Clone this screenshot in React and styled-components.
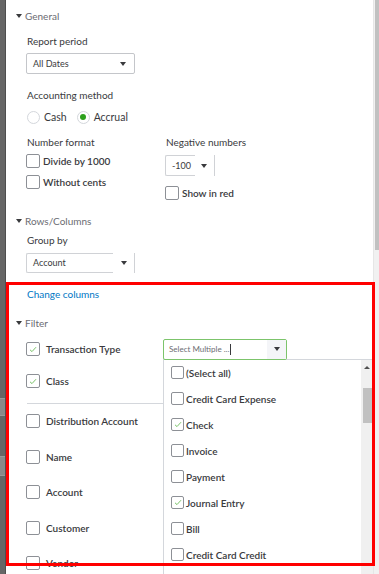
import React from "react";
import styled, { createGlobalStyle } from "styled-components";

const GlobalStyle = createGlobalStyle`
  html, body {
    margin: 0;
    padding: 0;
    background: #ffffff;
  }
  body {
    font-family: Lato, "Open Sans", "Liberation Sans", sans-serif;
  }
`;

const Screen = styled.div`
  position: relative;
  width: 379px;
  height: 574px;
  display: flex;
  overflow: hidden;
  background: #ffffff;
`;

const Backdrop = styled.div`
  width: 6px;
  flex-shrink: 0;
  background: #666666;
  border-right: 1px solid #4e4e4e;
  box-sizing: border-box;
  display: flex;
  flex-direction: column;
`;

const BackdropCell = styled.div`
  margin-top: ${p => p.$top}px;
  height: ${p => p.$height}px;
  background: #8a8a8a;
  border-top: 1px solid #9a9a9a;
  border-bottom: 1px solid #9a9a9a;
`;

const Panel = styled.div`
  flex: 1;
  min-width: 0;
  padding-left: 10px;
  display: flex;
  flex-direction: column;
  color: #393a3d;
`;

const PanelScroll = styled.div`
  width: 5px;
  flex-shrink: 0;
  background: #f1f1f1;
  border-left: 1px solid #e6e6e6;
`;

const PanelThumb = styled.div`
  margin-left: 1px;
  height: 250px;
  background: #c1c1c1;
`;

const SectionHeader = styled.div`
  display: flex;
  align-items: center;
  gap: 3px;
  height: 16px;
  margin-top: ${p => p.$top}px;
  font-size: 10px;
  color: #6b6c72;
`;

const Caret = styled.span`
  width: 0;
  height: 0;
  border-left: 3px solid transparent;
  border-right: 3px solid transparent;
  border-top: 4px solid #393a3d;
`;

const Indent = styled.div`
  margin-left: 10px;
  display: flex;
  flex-direction: column;
`;

const Label = styled.div`
  height: 16px;
  line-height: 16px;
  margin-top: ${p => p.$top || 0}px;
  margin-left: 1px;
  font-size: 10px;
  color: #393a3d;
`;

const SelectBox = styled.div`
  display: flex;
  align-items: center;
  justify-content: space-between;
  box-sizing: border-box;
  width: ${p => p.$width}px;
  height: ${p => p.$height}px;
  margin-top: ${p => p.$top}px;
  padding: 0 8px 0 6px;
  border: 1px solid #c4c6ca;
  border-radius: 2px;
  font-size: 9px;
  color: #393a3d;
`;

const SplitSelect = styled.div`
  display: flex;
  height: ${p => p.$height}px;
  margin-top: ${p => p.$top}px;
`;

const SplitText = styled.div`
  display: flex;
  align-items: center;
  box-sizing: border-box;
  width: ${p => p.$width}px;
  padding-left: 6px;
  border: 1px solid #d0d2d6;
  border-right: none;
  border-radius: 2px 0 0 2px;
  font-size: 9px;
  color: #393a3d;
`;

const SplitCaret = styled.div`
  display: flex;
  align-items: center;
  justify-content: ${p => (p.$left ? "flex-start" : "center")};
  padding-left: ${p => (p.$left ? 6 : 0)}px;
  box-sizing: border-box;
  width: ${p => p.$width}px;
  border-right: 1px solid #d0d2d6;
`;

const SmallCaret = styled.span`
  width: 0;
  height: 0;
  border-left: 3px solid transparent;
  border-right: 3px solid transparent;
  border-top: 4px solid #393a3d;
`;

const RadioRow = styled.div`
  display: flex;
  align-items: center;
  height: 16px;
  margin-top: 6px;
  margin-left: 1px;
  gap: 10px;
  font-size: 10.5px;
`;

const RadioOption = styled.label`
  display: flex;
  align-items: center;
  gap: 4px;
`;

const RadioCircle = styled.span`
  width: 13px;
  height: 13px;
  box-sizing: border-box;
  border-radius: 50%;
  border: 1px solid #d4d7dc;
  display: flex;
  align-items: center;
  justify-content: center;
  &::after {
    content: "";
    width: 6px;
    height: 6px;
    border-radius: 50%;
    background: ${p => (p.$on ? "#2ca01c" : "transparent")};
  }
`;

const TwoCols = styled.div`
  display: flex;
  margin-top: 9px;
`;

const Column = styled.div`
  width: ${p => (p.$width ? `${p.$width}px` : "auto")};
  display: flex;
  flex-direction: column;
`;

const CheckRow = styled.div`
  display: flex;
  align-items: center;
  gap: ${p => p.$gap || 3}px;
  height: ${p => p.$height || 16}px;
  margin-top: ${p => p.$top || 0}px;
  font-size: 10px;
  font-weight: 600;
  color: #393a3d;
`;

const Box = styled.span`
  width: ${p => p.$size}px;
  height: ${p => p.$size}px;
  flex-shrink: 0;
  box-sizing: border-box;
  border: 1px solid #8d9096;
  border-radius: 2px;
  background: #ffffff;
  display: flex;
  align-items: center;
  justify-content: center;
`;

const Link = styled.div`
  height: 16px;
  line-height: 16px;
  margin-top: 13px;
  margin-left: 1px;
  font-size: 10px;
  color: #0077c5;
`;

const FilterBody = styled.div`
  display: flex;
  margin-top: 9px;
`;

const FilterLeft = styled.div`
  width: 137px;
  flex-shrink: 0;
  display: flex;
  flex-direction: column;
`;

const Divider = styled.div`
  height: 1px;
  margin: 11px 0 0 1px;
  background: #d4d7dc;
`;

const FilterRight = styled.div`
  flex: 1;
  display: flex;
  flex-direction: column;
`;

const SearchInput = styled.div`
  display: flex;
  width: 124px;
  height: 21px;
  box-sizing: border-box;
  border: 1px solid #7cc46b;
  border-radius: 2px;
  background: #ffffff;
  position: relative;
  z-index: 1;
`;

const SearchText = styled.div`
  flex: 1;
  display: flex;
  align-items: center;
  padding-left: 5px;
  font-size: 8px;
  color: #6b6c72;
`;

const TextCursor = styled.span`
  width: 1px;
  height: 11px;
  margin-left: 1px;
  background: #393a3d;
`;

const SearchCaret = styled.div`
  width: 19px;
  display: flex;
  align-items: center;
  justify-content: center;
  background: #f4f5f8;
`;

const Dropdown = styled.div`
  flex: 1;
  display: flex;
  margin-top: -1px;
  border-top: 1px solid #d4d7dc;
  border-left: 1px solid #d4d7dc;
  background: #ffffff;
`;

const OptionList = styled.div`
  flex: 1;
  display: flex;
  flex-direction: column;
`;

const OptionRow = styled.div`
  display: flex;
  align-items: center;
  gap: 2px;
  height: 26px;
  flex-shrink: 0;
  padding-left: 7px;
  font-size: 10px;
  font-weight: 600;
  color: #393a3d;
`;

const DropScroll = styled.div`
  width: 12px;
  flex-shrink: 0;
  background: #f0f0f0;
  display: flex;
  flex-direction: column;
  align-items: center;
`;

const UpArrow = styled.span`
  margin-top: 6px;
  width: 0;
  height: 0;
  border-left: 3px solid transparent;
  border-right: 3px solid transparent;
  border-bottom: 3px solid #505050;
`;

const DropThumb = styled.div`
  width: 9px;
  height: 35px;
  margin-top: 19px;
  background: #c1c1c1;
`;

const Highlight = styled.div`
  position: absolute;
  left: 6px;
  top: 282px;
  width: 369px;
  height: 284px;
  box-sizing: border-box;
  border: 3px solid #ff0000;
  pointer-events: none;
`;

const Check = () => (
  <svg width="8" height="7" viewBox="0 0 8 7">
    <polyline points="1,3.8 3,5.6 7,1.2" fill="none" stroke="#7cc46b" strokeWidth="1" />
  </svg>
);

const CheckBox = ({ checked, size = 14 }) => (
  <Box $size={size}>{checked && <Check />}</Box>
);

const filterFields = [
  "Distribution Account",
  "Name",
  "Account",
  "Customer",
  "Vendor",
];

const transactionTypes = [
  { name: "(Select all)" },
  { name: "Credit Card Expense" },
  { name: "Check", checked: true },
  { name: "Invoice" },
  { name: "Payment" },
  { name: "Journal Entry", checked: true },
  { name: "Bill" },
  { name: "Credit Card Credit" },
];

const App = () => {
  return (
    <Screen>
      <GlobalStyle />
      <Backdrop>
        <BackdropCell $top={398} $height={16} />
        <BackdropCell $top={40} $height={18} />
      </Backdrop>

      <Panel>
        <SectionHeader $top={9}>
          <Caret />
          General
        </SectionHeader>
        <Indent>
          <Label $top={10}>Report period</Label>
          <SelectBox $width={109} $height={21} $top={4}>
            All Dates
            <SmallCaret />
          </SelectBox>

          <Label $top={13}>Accounting method</Label>
          <RadioRow>
            <RadioOption>
              <RadioCircle />
              Cash
            </RadioOption>
            <RadioOption>
              <RadioCircle $on />
              Accrual
            </RadioOption>
          </RadioRow>

          <TwoCols>
            <Column $width={139}>
              <Label>Number format</Label>
              <CheckRow $top={3}>
                <CheckBox />
                Divide by 1000
              </CheckRow>
              <CheckRow $top={5}>
                <CheckBox />
                Without cents
              </CheckRow>
            </Column>
            <Column>
              <Label>Negative numbers</Label>
              <SplitSelect $height={21} $top={5}>
                <SplitText $width={30}>-100</SplitText>
                <SplitCaret $width={20} $left>
                  <SmallCaret />
                </SplitCaret>
              </SplitSelect>
              <CheckRow $top={9}>
                <CheckBox />
                Show in red
              </CheckRow>
            </Column>
          </TwoCols>
        </Indent>

        <SectionHeader $top={13}>
          <Caret />
          Rows/Columns
        </SectionHeader>
        <Indent>
          <Label $top={3}>Group by</Label>
          <SplitSelect $height={20} $top={5}>
            <SplitText $width={87}>Account</SplitText>
            <SplitCaret $width={22}>
              <SmallCaret />
            </SplitCaret>
          </SplitSelect>
          <Link>Change columns</Link>
        </Indent>

        <SectionHeader $top={14}>
          <Caret />
          Filter
        </SectionHeader>
        <Indent>
          <FilterBody>
            <FilterLeft>
              <CheckRow $height={21} $gap={6}>
                <CheckBox checked />
                Transaction Type
              </CheckRow>
              <CheckRow $height={21} $gap={6} $top={11}>
                <CheckBox checked />
                Class
              </CheckRow>
              <Divider />
              {filterFields.map((field, i) => (
                <CheckRow key={field} $height={21} $gap={6} $top={i === 0 ? 7 : 14.5}>
                  <CheckBox />
                  {field}
                </CheckRow>
              ))}
            </FilterLeft>

            <FilterRight>
              <SearchInput>
                <SearchText>
                  Select Multiple ...
                  <TextCursor />
                </SearchText>
                <SearchCaret>
                  <SmallCaret />
                </SearchCaret>
              </SearchInput>
              <Dropdown>
                <OptionList>
                  {transactionTypes.map(t => (
                    <OptionRow key={t.name}>
                      <CheckBox size={13} checked={t.checked} />
                      {t.name}
                    </OptionRow>
                  ))}
                </OptionList>
                <DropScroll>
                  <UpArrow />
                  <DropThumb />
                </DropScroll>
              </Dropdown>
            </FilterRight>
          </FilterBody>
        </Indent>
      </Panel>

      <PanelScroll>
        <PanelThumb />
      </PanelScroll>

      <Highlight />
    </Screen>
  );
};

export default App;
